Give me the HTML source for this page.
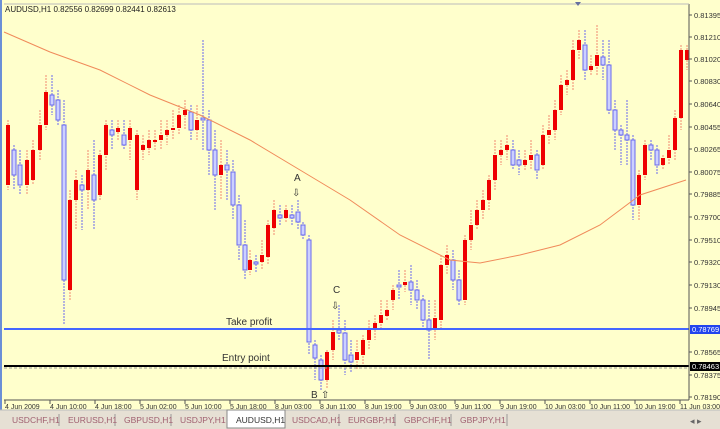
<!DOCTYPE html>
<html><head><meta charset="utf-8"><style>
html,body{margin:0;padding:0;width:720px;height:429px;overflow:hidden;background:#ffffcc;font-family:"Liberation Sans",sans-serif}
svg{position:absolute;left:0;top:0}
</style></head><body>
<svg id="s" width="720" height="429" xmlns="http://www.w3.org/2000/svg" font-family="Liberation Sans, sans-serif">
<rect width="720" height="429" fill="#ffffcc"/>
<rect x="0" y="0" width="2" height="410" fill="#6b8fd6"/>
<g id="c"></g>
<polyline fill="none" stroke="#f08a5a" stroke-width="1" points="4,32 50,52 100,70 150,95 200,115 250,140 300,170 350,200 400,235 450,260 480,263 520,255 560,245 600,225 640,195 686,180"/>
<line x1="4" y1="329" x2="689" y2="329" stroke="#4466ff" stroke-width="2"/>
<line x1="4" y1="366" x2="689" y2="366" stroke="#000" stroke-width="2"/>
<line x1="4" y1="368" x2="689" y2="368" stroke="#999" stroke-width="1" stroke-dasharray="3,2"/>
<text x="226" y="325" font-size="10" fill="#333">Take profit</text>
<text x="222" y="361" font-size="10" fill="#333">Entry point</text>
<text x="294" y="181" font-size="10" fill="#333">A</text>
<text x="292" y="196" font-size="10" fill="#333">⇩</text>
<text x="333" y="293" font-size="10" fill="#333">C</text>
<text x="331" y="309" font-size="10" fill="#333">⇩</text>
<text x="311" y="398" font-size="10" fill="#333">B</text>
<text x="321" y="398" font-size="10" fill="#333">⇧</text>
<text x="5" y="12" font-size="8" fill="#222">AUDUSD,H1  0.82556 0.82699 0.82441 0.82613</text>
<line x1="689" y1="4" x2="689" y2="400" stroke="#555"/>
<line x1="4" y1="400" x2="689" y2="400" stroke="#555"/>
<line x1="4" y1="4" x2="689" y2="4" stroke="#bbb"/>
<polygon points="575,2 581,2 578,6" fill="#6670a0"/>
<g id="p" font-size="7.5" fill="#333"></g>
<rect x="690" y="325" width="30" height="9" fill="#2244ee"/>
<text x="692" y="332" font-size="7.5" fill="#fff">0.78769</text>
<rect x="690" y="362" width="30" height="9" fill="#000"/>
<text x="692" y="369" font-size="7.5" fill="#fff">0.78463</text>
<g id="t" font-size="7" fill="#333"></g>
<rect x="0" y="410" width="720" height="19" fill="#e6e0d4"/>
<line x1="0" y1="410" x2="720" y2="410" stroke="#bbb"/>
<g id="tabs" font-size="8.5" fill="#a06070"></g>
<text x="690" y="424" font-size="9" fill="#666">◂  ▸</text>
</svg>
<script>
var d=[[8,185,125,120,190],[14,150,175,145,190],[20,165,185,150,195],[27,185,160,150,195],[33,180,150,140,185],[40,150,125,110,160],[46,125,92,75,130],[52,95,105,75,115],[58,100,120,90,125],[64,125,280,100,325],[70,290,200,190,300],[76,200,180,170,230],[82,185,190,175,230],[88,190,170,150,210],[94,175,200,140,230],[100,195,155,150,200],[106,155,125,120,170],[112,130,135,120,150],[118,132,128,120,140],[124,135,145,120,150],[130,140,128,120,160],[137,190,135,130,200],[143,150,145,135,160],[149,148,140,130,155],[155,142,140,130,150],[161,140,135,120,150],[167,135,130,120,145],[173,130,128,110,140],[179,128,115,105,135],[185,115,110,100,130],[191,112,130,105,140],[197,130,120,105,140],[203,118,120,40,150],[209,120,150,110,175],[215,150,175,130,210],[221,175,165,140,200],[227,165,170,150,200],[233,172,205,160,220],[239,205,245,195,260],[245,245,270,220,280],[250,270,260,250,275],[256,262,263,255,272],[262,262,255,240,270],[268,257,225,220,265],[274,228,210,200,235],[280,215,218,205,225],[286,218,210,205,222],[292,215,218,205,225],[298,212,222,200,230],[303,225,235,222,240],[309,240,342,235,355],[315,345,358,340,380],[321,360,380,355,390],[327,380,352,350,388],[333,350,332,320,360],[339,330,333,305,340],[345,333,360,320,375],[351,355,362,340,372],[357,360,352,340,370],[363,355,340,335,365],[369,340,328,320,350],[375,330,323,315,340],[381,323,315,300,330],[387,316,310,300,320],[393,300,290,285,310],[399,285,285,270,300],[405,285,282,270,292],[411,282,290,265,305],[417,290,300,280,310],[423,300,320,295,330],[429,320,330,300,360],[435,330,318,300,340],[441,320,265,255,330],[447,265,255,245,275],[453,260,280,250,290],[459,280,300,270,305],[465,300,240,235,305],[471,240,225,210,250],[477,225,210,200,230],[483,210,200,190,220],[489,200,180,175,210],[495,180,155,140,190],[501,155,150,140,165],[507,150,145,135,160],[513,150,165,140,170],[519,160,165,150,175],[525,165,160,150,170],[531,160,155,140,170],[537,155,170,150,180],[543,165,135,125,170],[549,135,130,115,145],[555,130,110,100,140],[561,110,85,75,115],[567,85,80,70,95],[573,80,50,40,90],[579,50,40,30,60],[585,45,70,30,80],[591,70,66,55,75],[597,66,55,25,75],[603,57,65,40,80],[609,65,110,40,115],[615,110,130,100,150],[621,130,135,125,165],[627,135,140,100,165],[633,140,205,135,220],[639,205,175,170,220],[645,175,145,140,180],[651,145,150,140,160],[657,150,165,145,175],[663,165,158,155,170],[669,158,150,135,165],[675,150,118,110,160],[681,118,50,45,130],[687,60,50,45,70]];
var s='';
d.forEach(function(c){var x=c[0],o=c[1],cl=c[2],h=c[3],l=c[4],up=cl<o,t=Math.min(o,cl),b=Math.max(o,cl);if(b-t<2)b=t+2;
if(up){s+='<line x1="'+x+'" y1="'+h+'" x2="'+x+'" y2="'+l+'" stroke="#f08a70" stroke-dasharray="2,1"/><rect x="'+(x-2)+'" y="'+t+'" width="4" height="'+(b-t)+'" fill="#ee0000"/>';}
else{s+='<line x1="'+x+'" y1="'+h+'" x2="'+x+'" y2="'+l+'" stroke="#6a6aee" stroke-dasharray="2,1"/><rect x="'+(x-2)+'" y="'+t+'" width="4" height="'+(b-t)+'" fill="#ccd0ff" stroke="#6a6aee" stroke-width="1"/>';}});
document.getElementById('c').innerHTML=s;
var p=[['0.81395',15],['0.81210',37],['0.81020',59],['0.80830',81],['0.80640',104],['0.80455',127],['0.80265',149],['0.80075',172],['0.79885',194],['0.79700',217],['0.79510',240],['0.79320',262],['0.79130',285],['0.78945',308],['0.78565',352],['0.78375',375],['0.78190',397]],q='';
p.forEach(function(a){q+='<line x1="689" y1="'+a[1]+'" x2="692" y2="'+a[1]+'" stroke="#555"/><text x="694" y="'+(a[1]+3)+'">'+a[0]+'</text>';});
document.getElementById('p').innerHTML=q;
var t=['4 Jun 2009','4 Jun 10:00','4 Jun 18:00','5 Jun 02:00','5 Jun 10:00','5 Jun 18:00','8 Jun 03:00','8 Jun 11:00','8 Jun 19:00','9 Jun 03:00','9 Jun 11:00','9 Jun 19:00','10 Jun 03:00','10 Jun 11:00','10 Jun 19:00','11 Jun 03:00'],r='';
t.forEach(function(a,i){var x=5+i*45;r+='<line x1="'+x+'" y1="400" x2="'+x+'" y2="404" stroke="#555"/><text x="'+x+'" y="409">'+a+'</text>';});
document.getElementById('t').innerHTML=r;
var tb=['USDCHF,H1','EURUSD,H1','GBPUSD,H1','USDJPY,H1','AUDUSD,H1','USDCAD,H1','EURGBP,H1','GBPCHF,H1','GBPJPY,H1'],u='';
tb.forEach(function(a,i){var x=4+i*56;if(i==4){u+='<rect x="'+(x-1)+'" y="410" width="58" height="18" fill="#fff" stroke="#888"/><text x="'+(x+8)+'" y="423" fill="#333">'+a+'</text>';}else{u+='<line x1="'+(x+55)+'" y1="414" x2="'+(x+55)+'" y2="426" stroke="#999"/><text x="'+(x+8)+'" y="423">'+a+'</text>';}});
document.getElementById('tabs').innerHTML=u;
</script>
</body></html>
